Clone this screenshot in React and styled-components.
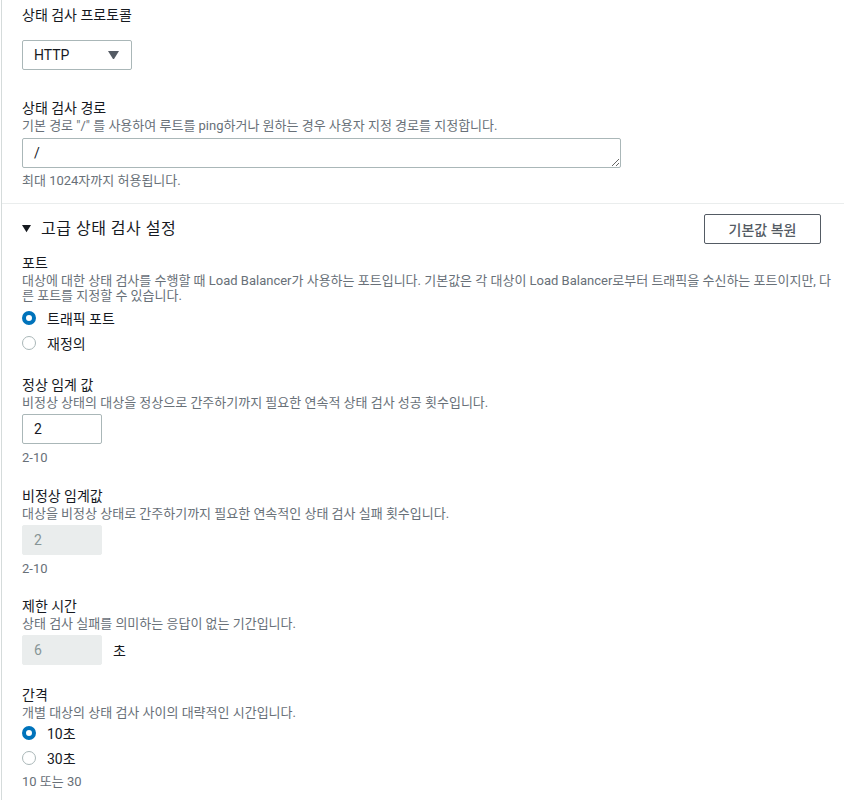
import React from "react";
import styled, { createGlobalStyle } from "styled-components";

const Global = createGlobalStyle`
  html, body { margin: 0; padding: 0; background: #fff; }
  body {
    font-family: Roboto, "Noto Sans CJK KR", sans-serif;
    color: #16191f;
  }
  * { box-sizing: border-box; }
`;

const Page = styled.div`
  margin-left: 1px;
  border-left: 1px solid #d5dbdb;
  min-height: 800px;
`;

const Section = styled.div`
  padding: 5px 23px 14px 20px;
`;

const Field = styled.div`
  display: flex;
  flex-direction: column;
  align-items: flex-start;
  margin-top: ${(p) => p.$gap ?? 0}px;
`;

const Label = styled.div`
  font-size: 14px;
  line-height: 18px;
  padding-top: ${(p) => (p.$first ? 1 : 0)}px;
  color: #16191f;
`;

const Desc = styled.div`
  font-size: 13px;
  line-height: 15px;
  margin-top: 1px;
  margin-right: ${(p) => (p.$wide ? "-16px" : "0")};
  color: #687078;
`;

const Hint = styled.div`
  font-size: 13px;
  line-height: 16px;
  margin-top: ${(p) => p.$gap ?? 6}px;
  color: #687078;
`;

const SelectBox = styled.div`
  margin-top: 16px;
  width: 110px;
  height: 30px;
  border: 1px solid #aab7b8;
  border-radius: 2px;
  display: flex;
  align-items: center;
  justify-content: space-between;
  padding: 0 12px 0 11px;
  font-size: 14px;
`;

const TextArea = styled.textarea`
  margin-top: 5px;
  width: 599px;
  height: 30px;
  border: 1px solid #aab7b8;
  border-radius: 2px;
  padding: 4px 11px;
  font-family: inherit;
  font-size: 14px;
  line-height: 20px;
  color: #16191f;
  resize: both;
  outline: none;
  overflow: hidden;
`;

const Divider = styled.hr`
  margin: 0;
  border: 0;
  border-top: 1px solid #eaeded;
`;

const Advanced = styled.div`
  padding: 10px 23px 20px 20px;
`;

const HeaderRow = styled.div`
  display: flex;
  align-items: center;
  justify-content: space-between;
`;

const HeaderTitle = styled.div`
  display: flex;
  align-items: center;
  gap: 10px;
  font-size: 16px;
  letter-spacing: 0.5px;
  line-height: 22px;
  color: #16191f;
`;

const Button = styled.button`
  width: 117px;
  height: 30px;
  border: 1px solid #545b64;
  border-radius: 2px;
  background: #fff;
  color: #545b64;
  font-family: inherit;
  font-size: 14px;
  font-weight: 500;
  padding: 0;
`;

const RadioGroup = styled.div`
  display: flex;
  flex-direction: column;
  margin-top: ${(p) => p.$gap ?? 2}px;
`;

const RadioRow = styled.label`
  display: flex;
  align-items: center;
  height: 25px;
  gap: 11px;
  font-size: 14px;
  color: #16191f;
`;

const RadioDot = styled.span`
  width: 14px;
  height: 14px;
  border-radius: 50%;
  border: ${(p) => (p.$checked ? "4px solid #0073bb" : "1px solid #aab7b8")};
  background: #fff;
  flex: none;
`;

const InputRow = styled.div`
  display: flex;
  align-items: center;
  gap: 11px;
  margin-top: 4px;
  font-size: 14px;
`;

const NumInput = styled.div`
  width: 80px;
  height: 30px;
  border: ${(p) => (p.$disabled ? "1px solid #eaeded" : "1px solid #aab7b8")};
  background: ${(p) => (p.$disabled ? "#eaeded" : "#fff")};
  color: ${(p) => (p.$disabled ? "#879596" : "#16191f")};
  border-radius: 2px;
  display: flex;
  align-items: center;
  padding-left: 11px;
  font-size: 14px;
`;

const Caret = ({ size = 10, color = "#545b64" }) => (
  <svg width={size} height={size * 0.8} viewBox="0 0 10 8">
    <path d="M0 0 L10 0 L5 8 Z" fill={color} />
  </svg>
);

function Radio({ checked, children }) {
  return (
    <RadioRow>
      <RadioDot $checked={checked} />
      {children}
    </RadioRow>
  );
}

export default function App() {
  return (
    <>
      <Global />
      <Page>
        <Section>
          <Field>
            <Label $first>상태 검사 프로토콜</Label>
            <SelectBox>
              <span>HTTP</span>
              <Caret size={11} />
            </SelectBox>
          </Field>
          <Field $gap={29}>
            <Label>상태 검사 경로</Label>
            <Desc>기본 경로 "/" 를 사용하여 루트를 ping하거나 원하는 경우 사용자 지정 경로를 지정합니다.</Desc>
            <TextArea readOnly defaultValue="/" />
            <Hint $gap={5}>최대 1024자까지 허용됩니다.</Hint>
          </Field>
        </Section>
        <Divider />
        <Advanced>
          <HeaderRow>
            <HeaderTitle>
              <Caret size={9} color="#16191f" />
              고급 상태 검사 설정
            </HeaderTitle>
            <Button>기본값 복원</Button>
          </HeaderRow>

          <Field $gap={10}>
            <Label>포트</Label>
            <Desc $wide>
              대상에 대한 상태 검사를 수행할 때 Load Balancer가 사용하는 포트입니다. 기본값은 각 대상이 Load Balancer로부터 트래픽을 수신하는 포트이지만, 다른 포트를 지정할 수 있습니다.
            </Desc>
            <RadioGroup $gap={2}>
              <Radio checked>트래픽 포트</Radio>
              <Radio>재정의</Radio>
            </RadioGroup>
          </Field>

          <Field $gap={21}>
            <Label>정상 임계 값</Label>
            <Desc>비정상 상태의 대상을 정상으로 간주하기까지 필요한 연속적 상태 검사 성공 횟수입니다.</Desc>
            <InputRow>
              <NumInput>2</NumInput>
            </InputRow>
            <Hint>2-10</Hint>
          </Field>

          <Field $gap={21}>
            <Label>비정상 임계값</Label>
            <Desc>대상을 비정상 상태로 간주하기까지 필요한 연속적인 상태 검사 실패 횟수입니다.</Desc>
            <InputRow>
              <NumInput $disabled>2</NumInput>
            </InputRow>
            <Hint>2-10</Hint>
          </Field>

          <Field $gap={20}>
            <Label>제한 시간</Label>
            <Desc>상태 검사 실패를 의미하는 응답이 없는 기간입니다.</Desc>
            <InputRow>
              <NumInput $disabled>6</NumInput>
              <span>초</span>
            </InputRow>
          </Field>

          <Field $gap={21}>
            <Label>간격</Label>
            <Desc>개별 대상의 상태 검사 사이의 대략적인 시간입니다.</Desc>
            <RadioGroup $gap={0}>
              <Radio checked>10초</Radio>
              <Radio>30초</Radio>
            </RadioGroup>
            <Hint $gap={4}>10 또는 30</Hint>
          </Field>
        </Advanced>
      </Page>
    </>
  );
}
